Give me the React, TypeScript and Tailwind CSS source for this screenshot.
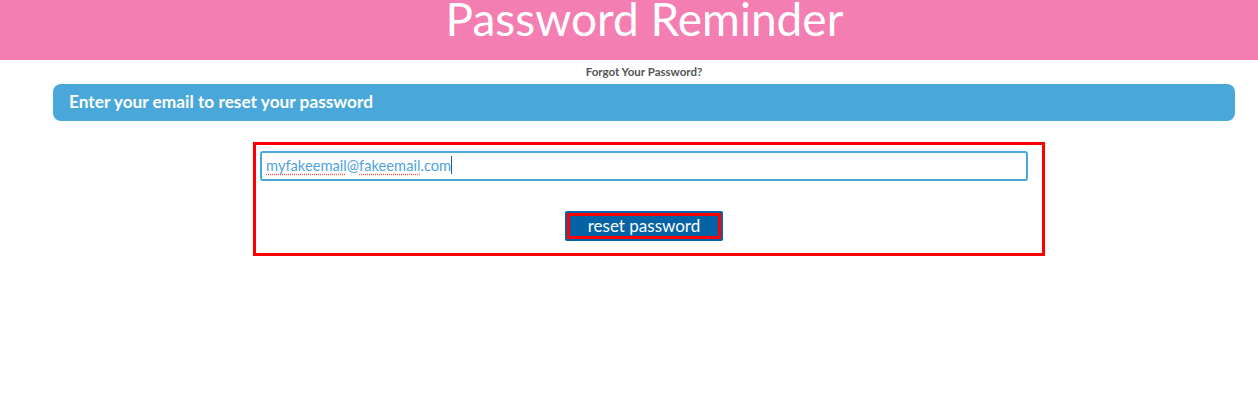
import React from "react";

export default function App() {
  return (
    <div className="w-[1258px] h-[413px] bg-white" style={{ fontFamily: "Lato, 'Noto Sans', sans-serif" }}>
      <div className="h-[60px] bg-[#f47db2] flex items-start justify-center pl-[31px]">
        <h1 className="text-white text-[46px] leading-[38px] font-normal">Password Reminder</h1>
      </div>
      <div className="text-center text-[11.5px] font-bold text-[#555] mt-[6px] leading-[12px] pl-[30px]">Forgot Your Password?</div>
      <div className="ml-[53px] mr-[23px] mt-[6px] h-[37px] rounded-[8px] bg-[#49a7da] flex items-center pl-[16px] pb-[2px]">
        <span className="text-white font-bold text-[17.3px]">Enter your email to reset your password</span>
      </div>
      <div className="ml-[253px] w-[792px] h-[114px] mt-[21px] border-[3px] border-[#ff0000] pt-[6px] pl-[4px]">
        <div className="w-[768px] h-[30px] border-[2px] border-[#49a7da] rounded-[3px] flex items-center pl-[4px] pb-[2px]">
          <span className="text-[14.7px] text-[#4fa3dc]">
            <span className="underline decoration-dotted decoration-[#ff5a5a] underline-offset-[3px]">myfakeemail</span>@<span className="underline decoration-dotted decoration-[#ff5a5a] underline-offset-[3px]">fakeemail</span>.com
          </span>
          <span className="w-px h-[18px] bg-[#1a5fa0]"></span>
        </div>
        <div className="w-[768px] flex justify-center mt-[30px]">
          <button className="w-[158px] h-[30px] bg-[#0563a5] rounded-[2px] p-[2px]">
            <div className="w-full h-full border-[3px] border-[#ff0000] flex items-center justify-center text-white text-[17px] leading-none pb-[2px]">reset password</div>
          </button>
        </div>
      </div>
    </div>
  );
}
